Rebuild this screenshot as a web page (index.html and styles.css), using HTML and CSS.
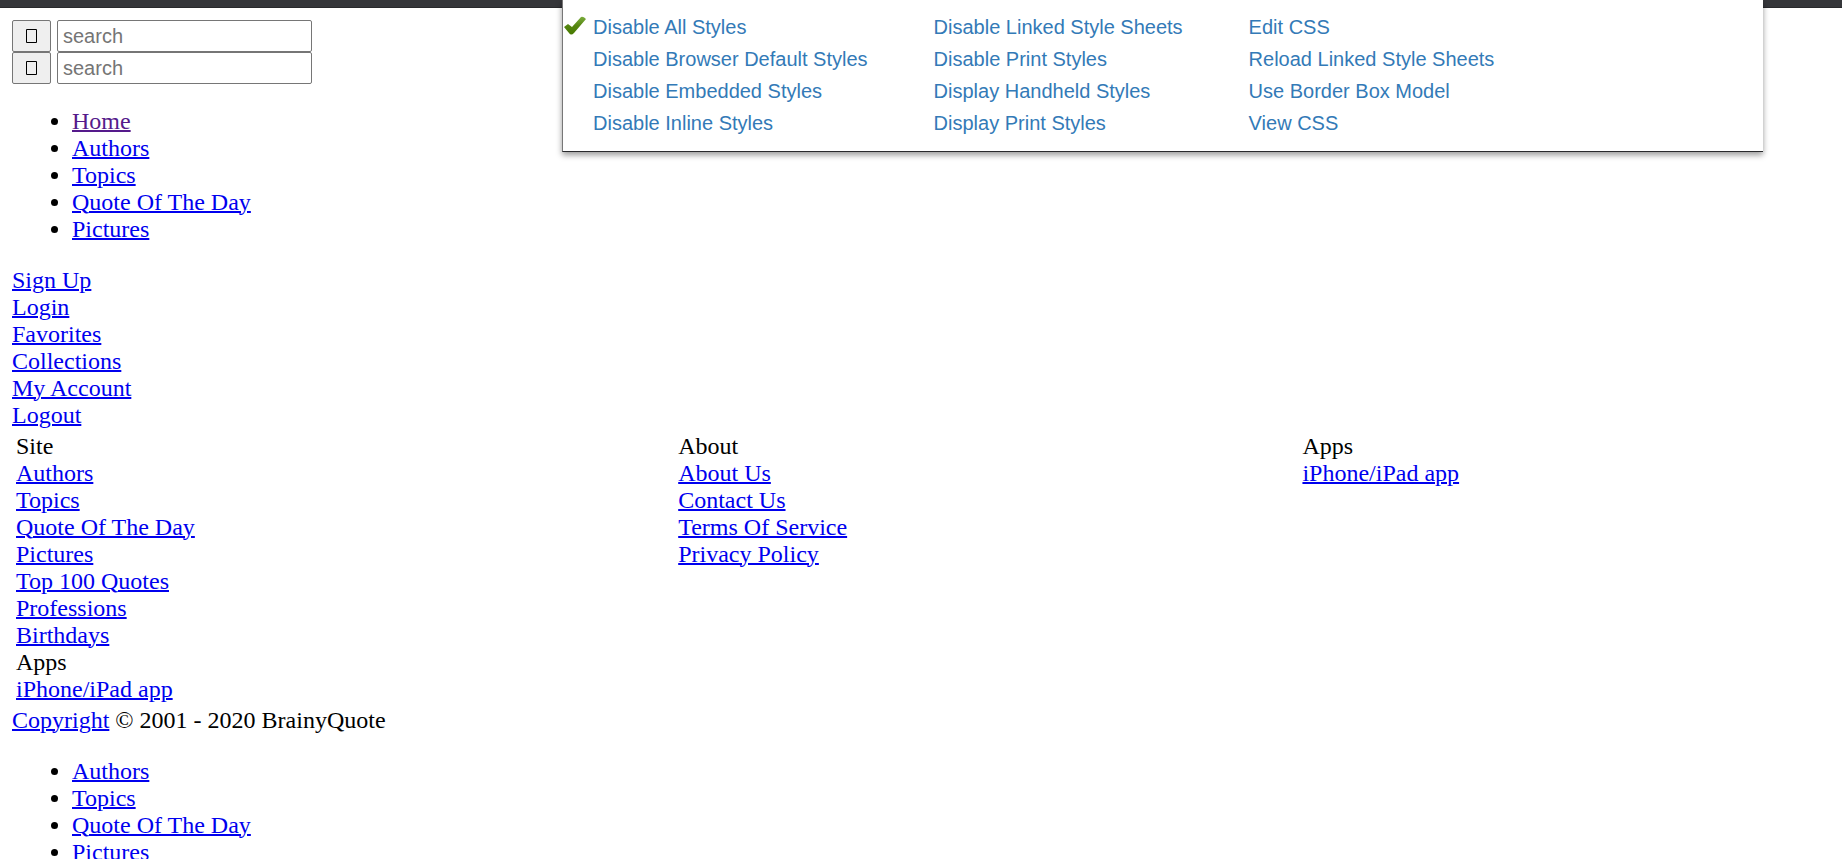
FILE: index.html
```html
<!DOCTYPE html>
<html lang="en">
<head>
<meta charset="utf-8">
<title>BrainyQuote</title>
<link rel="stylesheet" href="styles.css">
</head>
<body>
<div class="topbar"></div>
<nav class="tool-menu" aria-label="CSS tools">
  <ul class="tool-column">
    <li class="checked">
      <svg class="check" viewBox="0 0 24 22" aria-hidden="true">
        <defs><linearGradient id="green" x1="0" y1="0" x2="0" y2="1"><stop offset="0" stop-color="#7bad3e"/><stop offset="0.5" stop-color="#558510"/><stop offset="1" stop-color="#477a00"/></linearGradient></defs>
        <path d="M1 12 5 9 9 12 18 2Q20 1 23 4L11 18Q8 21 6 18Z" fill="url(#green)"/>
      </svg>
      <a href="#">Disable All Styles</a>
    </li>
    <li><a href="#">Disable Browser Default Styles</a></li>
    <li><a href="#">Disable Embedded Styles</a></li>
    <li><a href="#">Disable Inline Styles</a></li>
  </ul>
  <ul class="tool-column">
    <li><a href="#">Disable Linked Style Sheets</a></li>
    <li><a href="#">Disable Print Styles</a></li>
    <li><a href="#">Display Handheld Styles</a></li>
    <li><a href="#">Display Print Styles</a></li>
  </ul>
  <ul class="tool-column">
    <li><a href="#">Edit CSS</a></li>
    <li><a href="#">Reload Linked Style Sheets</a></li>
    <li><a href="#">Use Border Box Model</a></li>
    <li><a href="#">View CSS</a></li>
  </ul>
</nav>
<main class="page">
  <form class="search">
    <button class="search-button" type="button" aria-label="Search"><svg class="glyph" viewBox="0 0 11 14" aria-hidden="true"><path d="M.5 .5H10.5V13.5H.5Z"/></svg></button>
    <input class="search-input" type="text" placeholder="search" aria-label="Search quotes">
  </form>
  <form class="search">
    <button class="search-button" type="button" aria-label="Search"><svg class="glyph" viewBox="0 0 11 14" aria-hidden="true"><path d="M.5 .5H10.5V13.5H.5Z"/></svg></button>
    <input class="search-input" type="text" placeholder="search" aria-label="Search quotes">
  </form>
  <ul class="bullets">
    <li><a class="visited" href="#">Home</a></li>
    <li><a href="#">Authors</a></li>
    <li><a href="#">Topics</a></li>
    <li><a href="#">Quote Of The Day</a></li>
    <li><a href="#">Pictures</a></li>
  </ul>
  <div><a href="#">Sign Up</a></div>
  <div><a href="#">Login</a></div>
  <div><a href="#">Favorites</a></div>
  <div><a href="#">Collections</a></div>
  <div><a href="#">My Account</a></div>
  <div><a href="#">Logout</a></div>
  <table class="footer-table">
    <colgroup><col class="col-site"><col class="col-about"><col></colgroup>
    <tbody>
      <tr>
        <td>
          <div>Site</div>
          <div><a href="#">Authors</a></div>
          <div><a href="#">Topics</a></div>
          <div><a href="#">Quote Of The Day</a></div>
          <div><a href="#">Pictures</a></div>
          <div><a href="#">Top 100 Quotes</a></div>
          <div><a href="#">Professions</a></div>
          <div><a href="#">Birthdays</a></div>
          <div>Apps</div>
          <div><a href="#">iPhone/iPad app</a></div>
        </td>
        <td>
          <div>About</div>
          <div><a href="#">About Us</a></div>
          <div><a href="#">Contact Us</a></div>
          <div><a href="#">Terms Of Service</a></div>
          <div><a href="#">Privacy Policy</a></div>
        </td>
        <td>
          <div>Apps</div>
          <div><a href="#">iPhone/iPad app</a></div>
        </td>
      </tr>
    </tbody>
  </table>
  <div><a href="#">Copyright</a> © 2001 - 2020 BrainyQuote</div>
  <ul class="bullets">
    <li><a href="#">Authors</a></li>
    <li><a href="#">Topics</a></li>
    <li><a href="#">Quote Of The Day</a></li>
    <li><a href="#">Pictures</a></li>
  </ul>
</main>
</body>
</html>
```

FILE: styles.css
```css
html {
  scrollbar-width: none;
}

body {
  margin: 0;
  background: #fff;
  color: #000;
  font: 24px/27px "Liberation Serif", "Times New Roman", serif;
}

.topbar {
  height: 7px;
  background: #35363a;
  border-bottom: 1px solid #28292c;
}

.tool-menu {
  position: absolute;
  top: 0;
  right: 79px;
  display: flex;
  gap: 66px;
  box-sizing: border-box;
  width: 1201px;
  max-width: 90%;
  padding: 11px 30px 12px;
  background: #fff;
  border-left: 1px solid #777;
  border-bottom: 1px solid #292a2d;
  box-shadow: 0 3px 6px rgba(0, 0, 0, 0.4);
  font: 20px/32px "Liberation Sans", Arial, sans-serif;
  white-space: nowrap;
}

.tool-column {
  margin: 0;
  padding: 0;
  list-style: none;
}

.tool-menu a {
  color: #337ab7;
  text-decoration: none;
}

.checked {
  position: relative;
}

.check {
  position: absolute;
  left: -30px;
  top: 4px;
  width: 24px;
  height: 22px;
}

.page {
  padding: 12px;
}

.page a {
  color: #0000ee;
  text-decoration-thickness: 2px;
}

.page .visited {
  color: #551a8b;
}

.search {
  display: flex;
  gap: 6px;
}

.search-button,
.search-input {
  box-sizing: border-box;
  height: 32px;
  margin: 0;
  border: 1px solid #767676;
  border-radius: 2px;
}

.search-button {
  display: flex;
  align-items: center;
  justify-content: center;
  width: 39px;
  padding: 0;
  background: #efefef;
}

.glyph {
  width: 11px;
  height: 14px;
  fill: none;
  stroke: #000;
}

.search-input {
  width: 255px;
  padding: 0 5px;
  background: #fff;
  font: 20px "Liberation Sans", Arial, sans-serif;
}

.search-input::placeholder {
  color: #757575;
}

.bullets {
  margin: 24px 0;
  padding-left: 60px;
}

.footer-table {
  width: 100%;
  table-layout: fixed;
  border-spacing: 3px;
}

.footer-table td {
  padding: 1px;
  vertical-align: top;
}

.col-site {
  width: 36.5%;
}

.col-about {
  width: 34.4%;
}
```
